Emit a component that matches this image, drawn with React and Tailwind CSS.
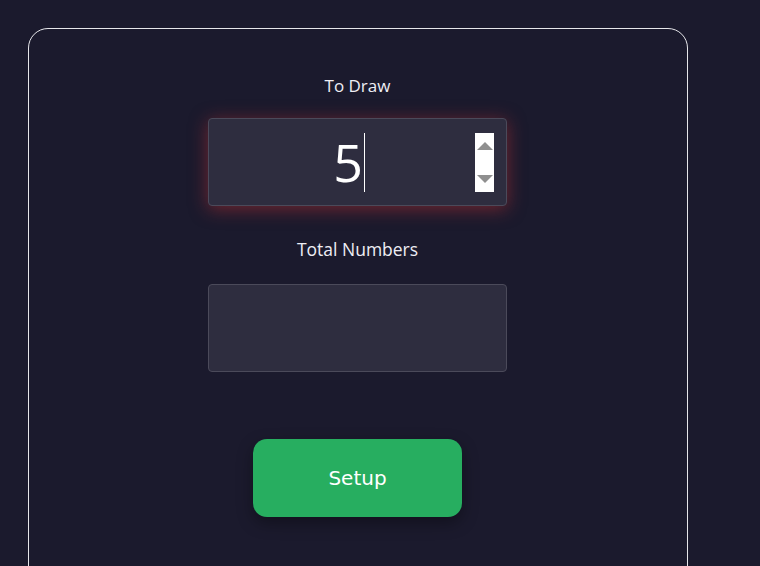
import React from "react";

function Spinner() {
  return (
    <div className="absolute right-[12px] top-[14px] w-[19px] h-[59px] bg-white flex flex-col items-center justify-between py-[9px]">
      <svg width="16" height="8" viewBox="0 0 16 8">
        <path d="M8 0 L16 8 L0 8 Z" fill="#8f8f8f" />
      </svg>
      <svg width="16" height="8" viewBox="0 0 16 8">
        <path d="M0 0 L16 0 L8 8 Z" fill="#8f8f8f" />
      </svg>
    </div>
  );
}

export default function App() {
  return (
    <div className="min-h-[566px] h-[566px] overflow-hidden bg-[#1b1a2d] pl-[28px] pt-[28px]">
      <div className="w-[660px] h-[600px] rounded-[20px] border border-[#e6e6ea] flex flex-col items-center pt-[45px] pr-[1px]">
        <div className="text-[17px] leading-[24px] text-[#eeeef4] font-['Open_Sans',sans-serif]">To Draw</div>
        <div className="relative mt-[20px] w-[299px] h-[88px] rounded-[4px] bg-[#2e2d3f] border border-[#4b4a5a] shadow-[0_3px_18px_rgba(200,50,50,0.5)] flex items-center justify-center">
          <span className="text-[52px] leading-none text-white font-['Open_Sans',sans-serif] ml-[-17px]">5</span>
          <span className="w-px h-[59px] bg-white ml-[1px]"></span>
          <Spinner />
        </div>
        <div className="mt-[31px] text-[17.5px] leading-[24px] text-[#eeeef4] font-['Open_Sans',sans-serif]">Total Numbers</div>
        <div className="mt-[23px] w-[299px] h-[88px] rounded-[4px] bg-[#2e2d3f] border border-[#4b4a5a]"></div>
        <button className="mt-[67px] w-[209px] h-[78px] rounded-[14px] bg-[#27ae60] text-white text-[20px] font-['DejaVu_Sans',sans-serif] shadow-[0_6px_16px_rgba(0,0,0,0.35)]">
          Setup
        </button>
      </div>
    </div>
  );
}
